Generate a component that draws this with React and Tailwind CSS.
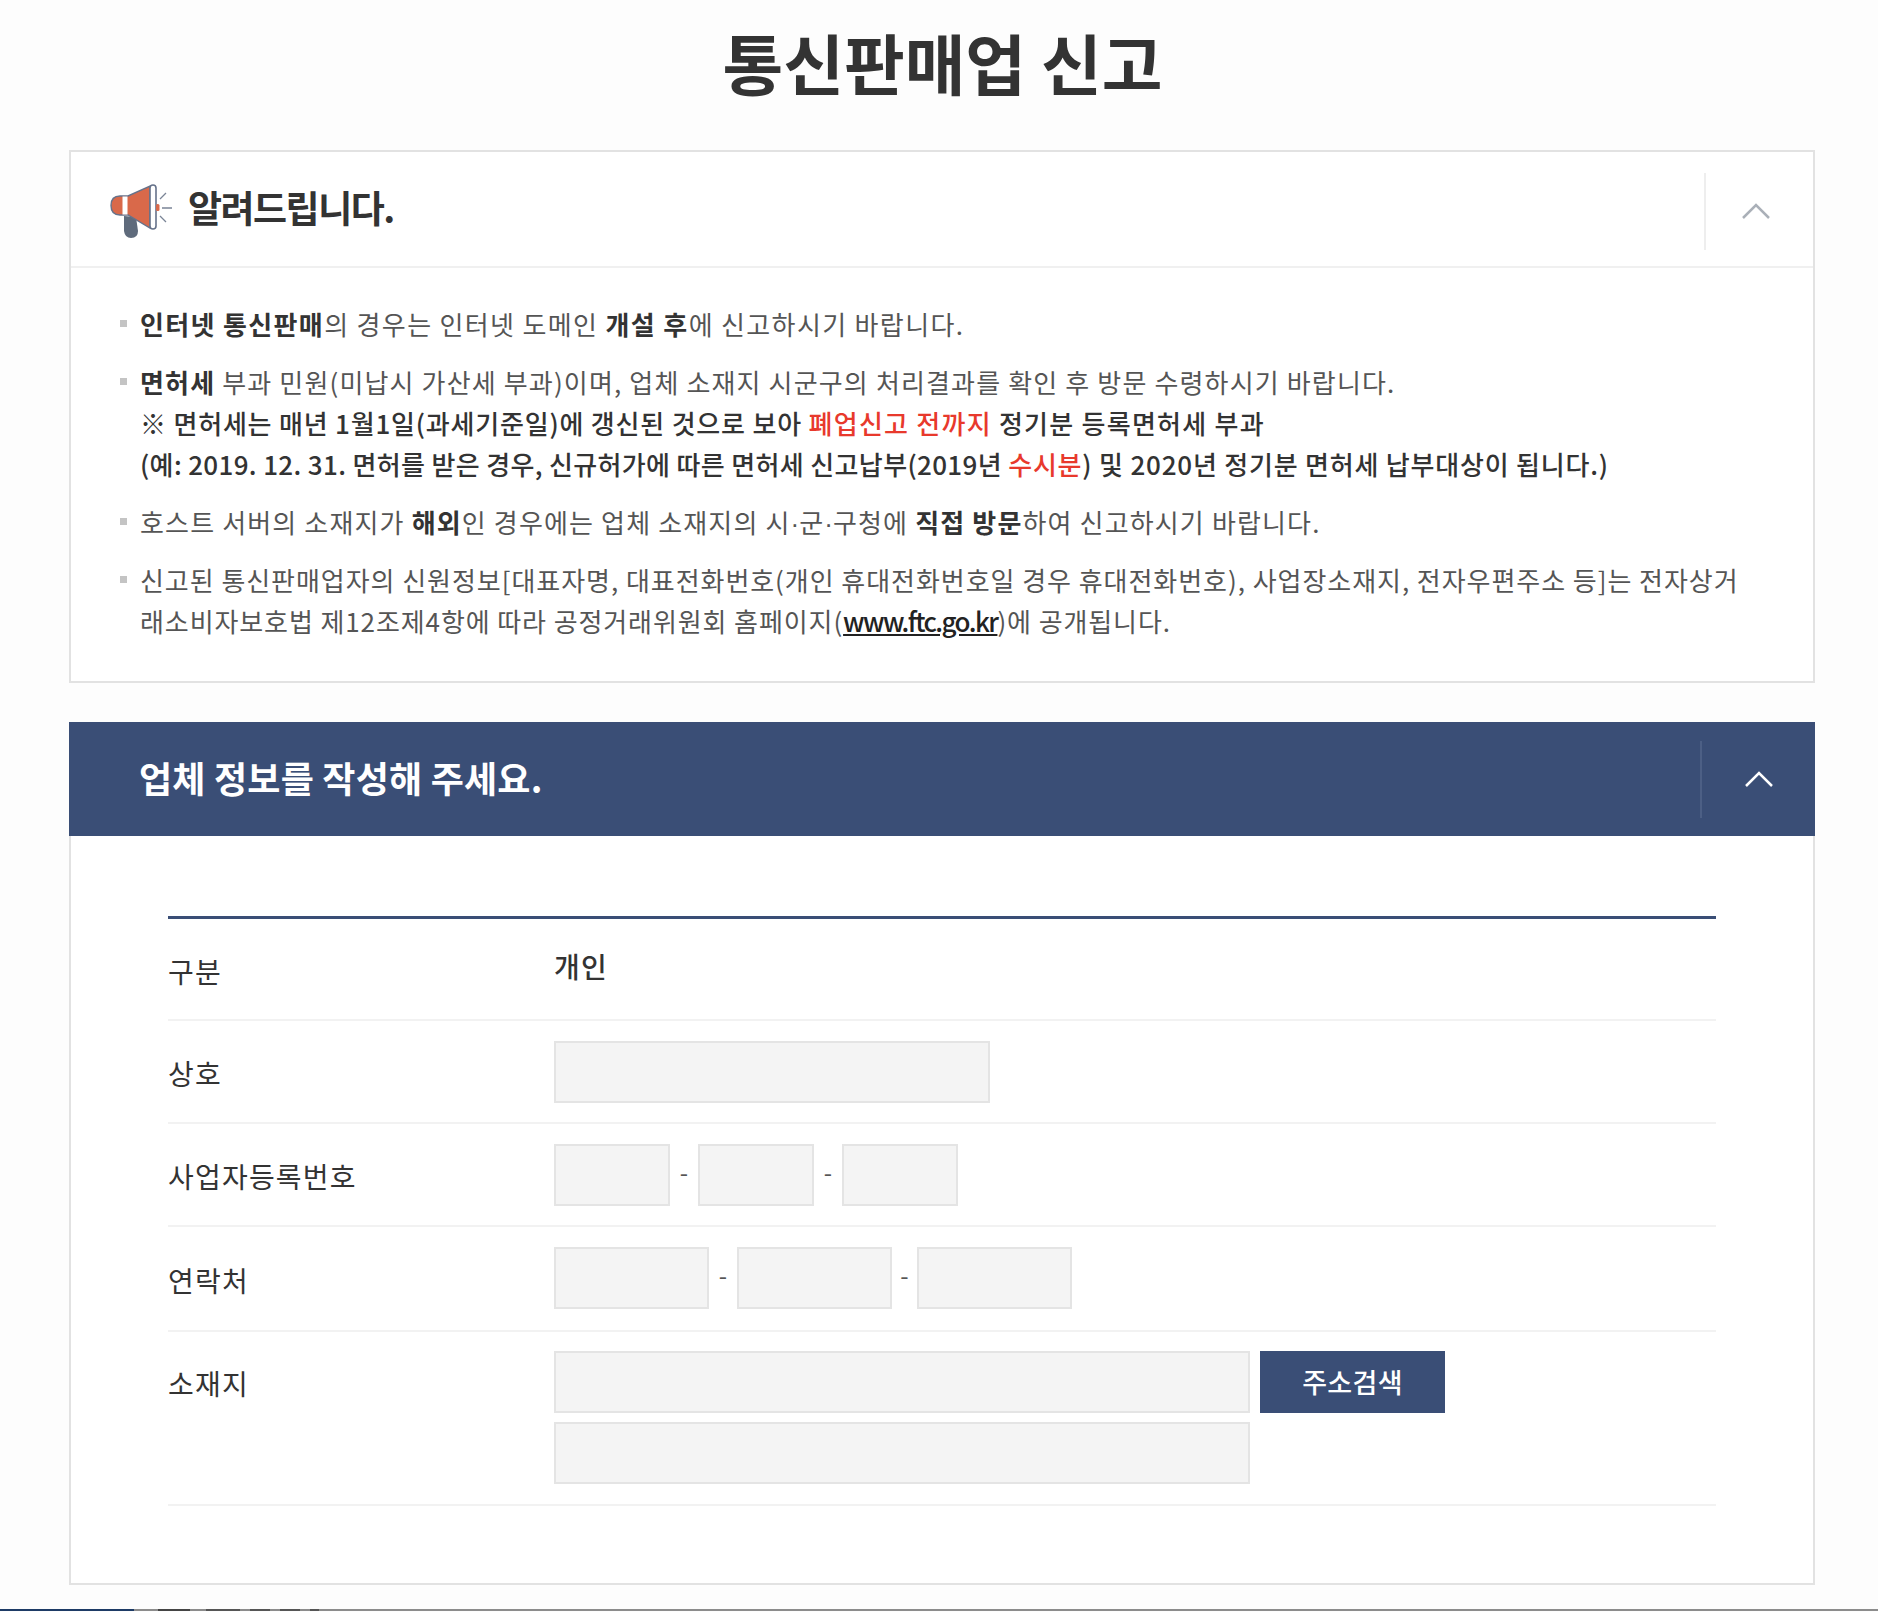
const font = { fontFamily: '"Noto Sans CJK KR", "Noto Sans", sans-serif' }

function Chevron({ color }) {
  return (
    <svg width="30" height="18" viewBox="0 0 30 18" fill="none" stroke={color} strokeWidth="2.5">
      <path d="M2 16 L15 3 L28 16" />
    </svg>
  )
}

function Megaphone() {
  return (
    <svg width="62" height="54" viewBox="10 8 62 54">
      <path d="M24 40 L36 41 L38 55 Q38 62 31 62 Q25 62 24 55 Z" fill="#5f6b7c" />
      <path d="M20 20 H28 L50 10 V52 L28 39 H20 Q11 39 11 29.5 Q11 20 20 20 Z" fill="#d9694a" stroke="#66728a" strokeWidth="1.4" />
      <rect x="22.5" y="20.5" width="5" height="18" fill="#fff" />
      <rect x="50" y="9" width="6" height="44" rx="3" fill="#fff" stroke="#66728a" strokeWidth="1.6" />
      <rect x="56" y="28" width="3.5" height="7" rx="1.5" fill="#d9694a" />
      <path d="M60 23 L66 17 M62 32 H72 M60 40 L66 46" stroke="#7a8496" strokeWidth="1.3" fill="none" />
    </svg>
  )
}

function Notice({ children }) {
  return (
    <li className="relative pl-[20px] text-[26px] leading-[41px] tracking-[1.15px] whitespace-nowrap text-[#555]">
      <span className="absolute left-0 top-[17px] w-[7px] h-[7px] bg-[#c4c4c4]" />
      {children}
    </li>
  )
}

function Row({ label, className, labelClass = 'pt-[32px]', children }) {
  return (
    <div className={`flex border-b-2 border-[#f2f2f2] ${className}`}>
      <div className={`w-[386px] text-[28px] leading-[40px] tracking-[1.2px] text-[#333] ${labelClass}`}>{label}</div>
      <div className="flex-1">{children}</div>
    </div>
  )
}

function Field({ className }) {
  return <input className={`h-[62px] bg-[#f4f4f4] border-2 border-[#e4e4e4] ${className}`} />
}

function Dash({ className = 'w-[28px]' }) {
  return <span className={`text-center text-[24px] text-[#555] -mt-[6px] ${className}`}>-</span>
}

export default function App() {
  return (
    <div className="h-[1612px] overflow-hidden bg-[#fdfdfd] flex flex-col" style={font}>
      <h1 className="h-[150px] shrink-0 pt-[19px] pl-[7px] text-center text-[66px] leading-[84px] font-bold text-[#333]">통신판매업 신고</h1>

      <div className="ml-[69px] w-[1746px] shrink-0">
        <section className="border-2 border-[#e2e2e2] bg-white">
          <div className="h-[116px] flex items-center border-b-2 border-[#f0f0f0]">
            <div className="flex-1 flex items-center pl-[39px] pt-[4px] gap-[16px]">
              <Megaphone />
              <h2 className="text-[37px] leading-[50px] font-bold -mt-[9px] tracking-[-1.5px] text-[#333]">알려드립니다.</h2>
            </div>
            <div className="w-[109px] h-[77px] mt-[4px] border-l-2 border-[#eeeeee] flex items-center justify-center pr-[8px]">
              <Chevron color="#aab0b8" />
            </div>
          </div>
          <ul className="pl-[49px] pt-[35px] pb-[40px] flex flex-col gap-[17px]">
            <Notice>
              <span className="tracking-[1.35px]">
                <b className="font-bold text-[#333]">인터넷 통신판매</b>의 경우는 인터넷 도메인 <b className="font-bold text-[#333]">개설 후</b>에 신고하시기 바랍니다.
              </span>
            </Notice>
            <Notice>
              <b className="font-bold text-[#333]">면허세</b> 부과 민원(미납시 가산세 부과)이며, 업체 소재지 시군구의 처리결과를 확인 후 방문 수령하시기 바랍니다.
              <br />
              <span className="font-medium text-[#333] tracking-[1.25px]">
                <span className="tracking-[0.8px]">※ 면허세는 매년 1월1일(과세기준일)에 갱신된 것으로 보아 </span><span className="text-[#e8392c]">폐업신고 전까지</span> 정기분 등록면허세 부과
              </span>
              <br />
              <span className="font-medium text-[#333] tracking-[0.8px]">
                <span className="tracking-[0.35px]">(예: 2019. 12. 31. 면허를 받은 경우, 신규허가에 따른 면허세 신고납부(2019년 </span><span className="text-[#e8392c]">수시분</span>) 및 2020년 정기분 면허세 납부대상이 됩니다.)
              </span>
            </Notice>
            <Notice>
              호스트 서버의 소재지가 <b className="font-bold text-[#333]">해외</b>인 경우에는 업체 소재지의 시<span className="font-['Liberation_Sans'] tracking-normal leading-none">·</span>군<span className="font-['Liberation_Sans'] tracking-normal leading-none">·</span>구청에 <b className="font-bold text-[#333]">직접 방문</b>하여 신고하시기 바랍니다.
            </Notice>
            <Notice>
              <span className="tracking-[0.95px]">신고된 통신판매업자의 신원정보[대표자명, 대표전화번호(개인 휴대전화번호일 경우 휴대전화번호), 사업장소재지, 전자우편주소 등]는 전자상거</span>
              <br />
              <span className="tracking-[0.9px]">래소비자보호법 제12조제4항에 따라 공정거래위원회 홈페이지(</span><a className="underline font-medium text-[#222] tracking-[-1.55px]">www.ftc.go.kr</a><span className="tracking-[0.9px]">)에 공개됩니다.</span>
            </Notice>
          </ul>
        </section>

        <section className="mt-[39px]">
          <div className="h-[114px] bg-[#3a4e76] flex items-center">
            <h2 className="flex-1 pl-[70px] pb-[4px] text-[36px] leading-[50px] font-bold tracking-[0.2px] text-white">업체 정보를 작성해 주세요.</h2>
            <div className="w-[115px] h-[77px] border-l-2 border-[#4c5f85] flex items-center justify-center">
              <Chevron color="#ffffff" />
            </div>
          </div>
          <div className="h-[749px] border-2 border-t-0 border-[#e2e2e2] bg-white px-[97px] pt-[80px]">
            <div className="border-t-[3px] border-[#3a4e76]">
              <Row label="구분" className="h-[102px]">
                <div className="text-[28px] leading-[40px] tracking-[1.2px] text-[#333] pt-[27px] font-medium">개인</div>
              </Row>
              <Row label="상호" className="h-[103px]">
                <div className="pt-[20px]"><Field className="w-[436px]" /></div>
              </Row>
              <Row label="사업자등록번호" className="h-[103px]">
                <div className="pt-[20px] flex items-center">
                  <Field className="w-[116px]" />
                  <Dash />
                  <Field className="w-[116px]" />
                  <Dash />
                  <Field className="w-[116px]" />
                </div>
              </Row>
              <Row label="연락처" labelClass="pt-[33px]" className="h-[105px]">
                <div className="pt-[20px] flex items-center">
                  <Field className="w-[155px]" />
                  <Dash />
                  <Field className="w-[155px]" />
                  <Dash className="w-[25px]" />
                  <Field className="w-[155px]" />
                </div>
              </Row>
              <Row label="소재지" labelClass="pt-[31px]" className="h-[174px]">
                <div className="pt-[19px] flex gap-[10px]">
                  <div className="flex flex-col gap-[9px]">
                    <Field className="w-[696px]" />
                    <Field className="w-[696px]" />
                  </div>
                  <button className="w-[185px] h-[62px] bg-[#3a4e76] text-white text-[27px] font-medium tracking-[0.3px]">주소검색</button>
                </div>
              </Row>
            </div>
          </div>
        </section>
      </div>

      <div className="mt-[24px] h-[2px] shrink-0 flex">
        <div className="w-[134px] bg-[#1d3b66]" />
        <div className="w-[24px] bg-[#8c8c8c]" />
        <div className="w-[32px] bg-[#444]" />
        <div className="w-[16px] bg-[#8c8c8c]" />
        <div className="w-[34px] bg-[#555]" />
        <div className="w-[10px] bg-[#8c8c8c]" />
        <div className="w-[20px] bg-[#555]" />
        <div className="w-[10px] bg-[#8c8c8c]" />
        <div className="w-[20px] bg-[#555]" />
        <div className="w-[10px] bg-[#8c8c8c]" />
        <div className="w-[9px] bg-[#555]" />
        <div className="flex-1 bg-[#8c8c8c]" />
      </div>
    </div>
  )
}
